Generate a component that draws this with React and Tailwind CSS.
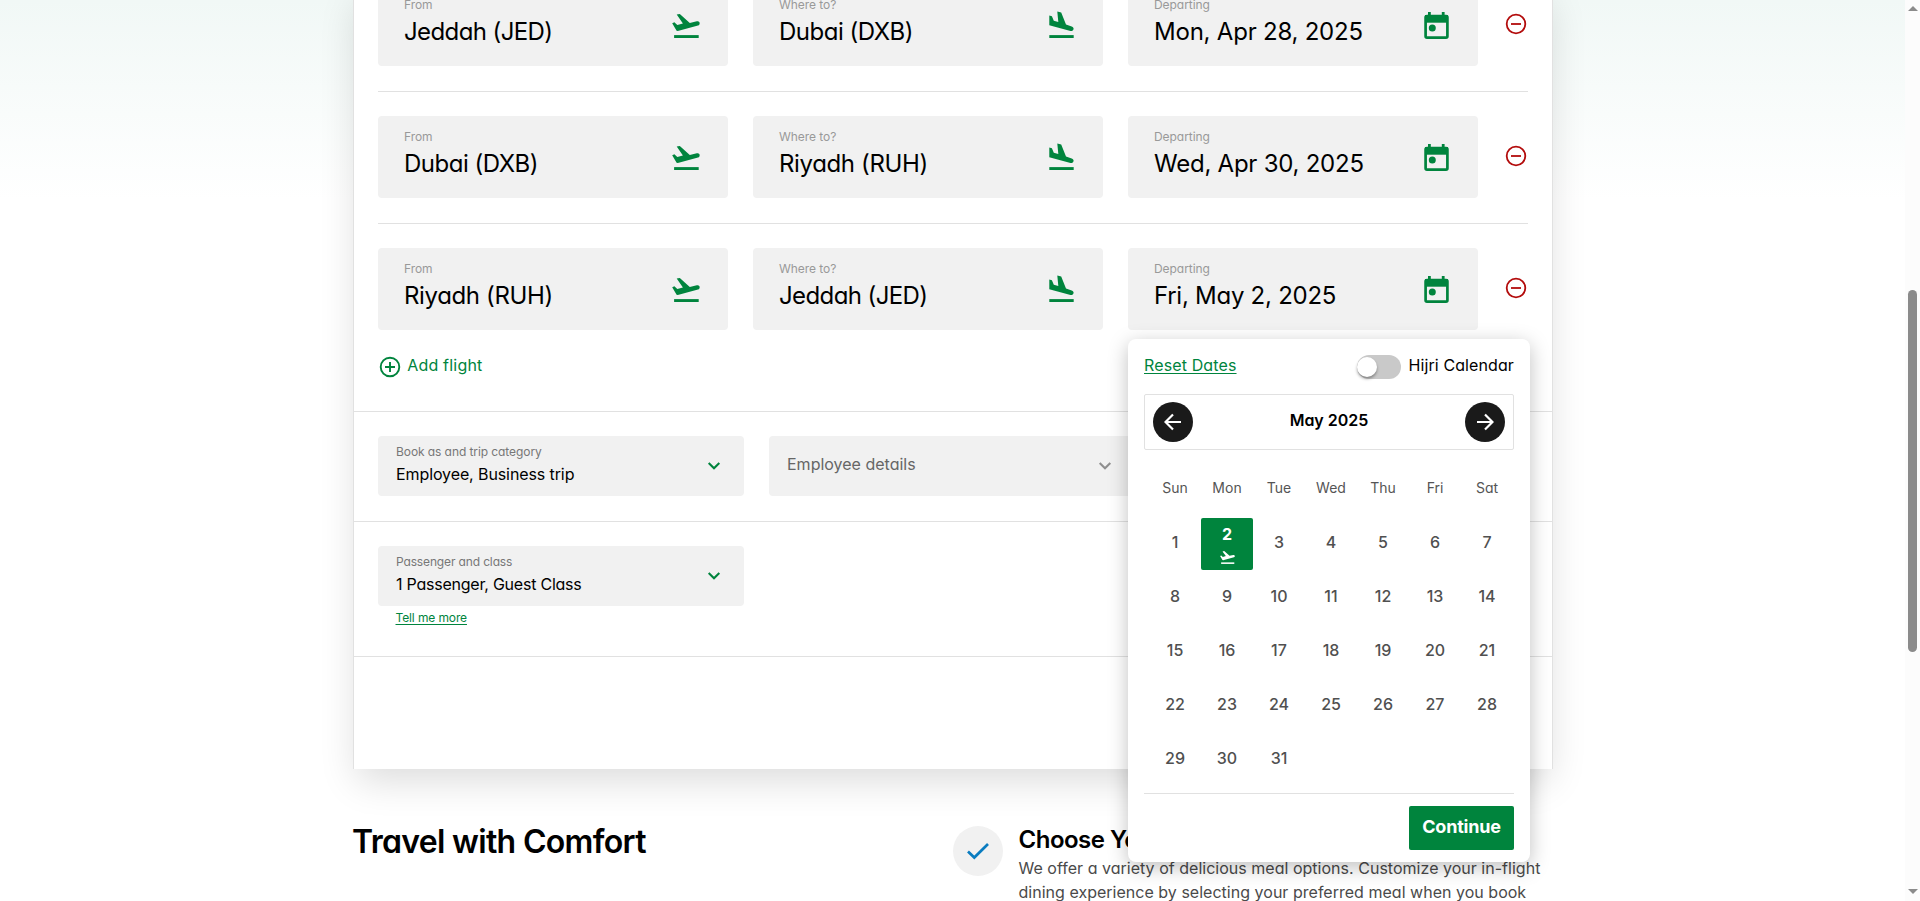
const jeddah = { text: "Jeddah (JED)", tracking: "tracking-[-0.6px]" };
const dubai = { text: "Dubai (DXB)", tracking: "tracking-[-0.5px]" };
const riyadh = { text: "Riyadh (RUH)", tracking: "tracking-[-0.36px]" };

const legs = [
  { from: jeddah, to: dubai, date: { text: "Mon, Apr 28, 2025", tracking: "tracking-[-0.22px]" } },
  { from: dubai, to: riyadh, date: { text: "Wed, Apr 30, 2025", tracking: "tracking-[-0.24px]" } },
  { from: riyadh, to: jeddah, date: { text: "Fri, May 2, 2025", tracking: "tracking-[-0.26px]" } },
];

const Takeoff = ({ className }) => (
  <svg viewBox="0 0 28 24" fill="currentColor" className={className}>
    <path d="M4.7.6 7.8 0l10 8.9 7-1.6c1.3-.3 2.4.3 2.8 1.4.3 1.3-.3 2.5-1.6 2.9L5.8 17l-1.2-.3L.2 9.3l2.2-1 2.9 2.6 5.6-1.5z" />
    <path d="M2.1 21.1h24.6V24H2.1z" />
  </svg>
);

const Land = ({ className }) => (
  <svg viewBox="0 0 25 27" fill="currentColor" className={className}>
    <path d="m8.3.4 3.9 1.2 4.8 12 5.7 1.8c1.5.5 2.2 1.6 1.8 2.9-.4 1.4-1.5 2.1-3 1.7L.3 14.2V4.4l2.6.9 1.9 4.5 4.5 1.2z" />
    <path d="M.3 24.1h24.4V27H.3z" />
  </svg>
);

const Today = ({ className }) => (
  <svg viewBox="0 0 25 27" className={className}>
    <rect x="4" y="0" width="2.8" height="5" fill="currentColor" />
    <rect x="17.8" y="0" width="2.8" height="5" fill="currentColor" />
    <rect x="1.6" y="4" width="21.8" height="21.6" rx="1.4" fill="none" stroke="currentColor" strokeWidth="2.7" />
    <rect x="1" y="3" width="23" height="7.7" fill="currentColor" />
    <circle cx="8.3" cy="16" r="3.5" fill="currentColor" />
  </svg>
);

const Remove = () => (
  <svg viewBox="0 0 22 22" className="size-[22px] text-[#b30c0c]" fill="none" stroke="currentColor" strokeWidth="1.8">
    <circle cx="11" cy="11" r="9.3" />
    <path d="M6 11h10" />
  </svg>
);

const Chevron = ({ className }) => (
  <svg viewBox="0 0 14 10" className={className} fill="none" stroke="currentColor" strokeWidth="2.1">
    <path d="M1.7 2 7 7.3 12.3 2" />
  </svg>
);

const Arrow = ({ className }) => (
  <span className="flex size-10 items-center justify-center rounded-full bg-[#1a1a1a] text-white">
    <svg viewBox="0 0 18 18" className={className} fill="none" stroke="currentColor" strokeWidth="2.2">
      <path d="M17 9H2M9 1.5 1.5 9 9 16.5" />
    </svg>
  </span>
);

const Field = ({ label, value, icon, iconClass, children }) => (
  <div className="relative flex h-[82px] w-[350px] justify-between rounded bg-[#f1f1f1] pl-[26px] pt-[13px]">
    <div className="whitespace-nowrap">
      <div className="text-[12px] leading-4 tracking-[-0.05px] text-[#999]">{label}</div>
      <div className={"mt-[3px] text-[24px] leading-8 text-black " + value.tracking}>{value.text}</div>
    </div>
    <div className={"text-[#00843d] " + iconClass}>{icon}</div>
    {children}
  </div>
);

const Select = ({ label, labelClass, value, valueClass, chevron = "text-[#00843d]", placeholder }) => (
  <div className="flex h-[60px] w-[366px] justify-between whitespace-nowrap rounded bg-[#f1f1f1] pl-[18px] pr-[23px]">
    {placeholder ? (
      <div className="pt-4 text-[16px] leading-6 text-[#666]">{placeholder}</div>
    ) : (
      <div className="pt-2">
        <div className={"text-[12px] leading-4 text-[#777] " + labelClass}>{label}</div>
        <div className={"mt-0.5 text-[16px] leading-6 text-black " + valueClass}>{value}</div>
      </div>
    )}
    <Chevron className={"mt-[25px] h-[10px] w-[14px] " + chevron} />
  </div>
);

const days = Array.from({ length: 31 }, (_, i) => i + 1);

const Calendar = () => (
  <div className="absolute left-0 top-[91px] z-20 flex h-[523px] w-[402px] flex-col rounded-lg bg-white px-4 text-black shadow-[0_5px_20px_rgba(0,0,0,0.25)]">
    <div className="mt-4 flex h-6 items-center justify-between text-[16px] leading-6">
      <a className="-mt-1 tracking-[0.13px] text-[#00843d] underline underline-offset-2">Reset Dates</a>
      <div className="flex items-center">
        <span className="mr-2 flex h-6 w-11 items-center rounded-full bg-[#c9c9c9]">
          <span className="size-5 rounded-full bg-white shadow-[0_2px_3px_rgba(0,0,0,0.35)]" />
        </span>
        <span className="-mt-1 tracking-[0.1px]">Hijri Calendar</span>
      </div>
    </div>
    <div className="mt-[15px] flex h-14 items-center justify-between rounded-xs border border-[#e1e1e1] px-2">
      <Arrow className="size-[18px]" />
      <span className="-mt-1 text-[16px] font-semibold leading-6">May 2025</span>
      <Arrow className="size-[18px] rotate-180" />
    </div>
    <div className="ml-[5px] mt-[26px] grid grid-cols-[repeat(7,52px)] text-center text-[14px] leading-6 text-[#555]">
      {["Sun", "Mon", "Tue", "Wed", "Thu", "Fri", "Sat"].map((d) => (
        <span key={d}>{d}</span>
      ))}
    </div>
    <div className="ml-[5px] mt-[18px] grid grid-cols-[repeat(7,52px)] gap-y-0.5 text-center text-[16px] font-medium leading-6 text-[#505050]">
      {days.map((d) =>
        d === 2 ? (
          <div key={d} className="flex h-[52px] flex-col items-center rounded-xs bg-[#00843d] pt-1 font-bold text-white">
            {d}
            <Takeoff className="mt-[5px] h-[13px] w-[15px]" />
          </div>
        ) : (
          <div key={d} className="h-[52px] pt-3">{d}</div>
        )
      )}
    </div>
    <div className="mt-[7px] flex justify-end border-t border-[#e1e1e1] pt-3">
      <button className="h-11 w-[105px] rounded-xs bg-[#00843d] pb-[3px] text-[18px] font-bold tracking-[-0.2px] text-white">Continue</button>
    </div>
  </div>
);

const Scrollbar = () => (
  <div className="flex h-full w-[15px] shrink-0 flex-col items-center bg-[#fcfcfc]">
    <svg viewBox="0 0 10 5" className="mt-1.5 h-[5px] w-[10px]"><path d="M0 5 5 0l5 5z" fill="#8b8b8b" /></svg>
    <div className="mt-[279px] h-[362px] w-[9px] rounded-full bg-[#8b8b8b]" />
    <svg viewBox="0 0 10 5" className="mt-auto mb-[7px] h-[5px] w-[10px]"><path d="M0 0 5 5l5-5z" fill="#8b8b8b" /></svg>
  </div>
);

export default function App() {
  return (
    <div className="flex h-[901px] w-full overflow-hidden bg-white font-['Inter',sans-serif] [font-feature-settings:'cv11']">
      <div className="flex min-w-0 flex-1 flex-col bg-gradient-to-b from-[#f1f8f6] to-white to-[200px] pl-[353px]">
        <main className="relative z-10 -mt-4 h-[785px] w-[1200px] shrink-0 border-x border-[#e1e1e1] bg-white shadow-[0_16px_36px_-4px_rgba(0,0,0,0.14)]">
          <div className="flex h-[427px] flex-col px-6">
            {legs.map((leg, i) => (
              <div key={i} className={i < 2 ? "mb-6 flex gap-[25px] border-b border-[#e1e1e1] pb-[25px]" : "flex gap-[25px]"}>
                <Field label="From" value={leg.from} iconClass="mr-7 mt-[17px]" icon={<Takeoff className="h-6 w-7" />} />
                <Field label="Where to?" value={leg.to} iconClass="mr-[29px] mt-3.5" icon={<Land className="h-[27px] w-[25px]" />} />
                <Field label="Departing" value={leg.date} iconClass="mr-[29px] mt-[15px]" icon={<Today className="h-[27px] w-[25px]" />}>
                  {i === 2 && <Calendar />}
                </Field>
                <div className="ml-[1.5px] mt-[29px]"><Remove /></div>
              </div>
            ))}
            <div className="mt-6 flex items-center text-[16px] leading-6 text-[#00843d]">
              <svg viewBox="0 0 22 22" className="ml-[0.7px] mt-0.5 size-[22px]" fill="none" stroke="currentColor" strokeWidth="1.9">
                <circle cx="11" cy="11" r="9.3" />
                <path d="M6 11h10M11 6v10" />
              </svg>
              <span className="-mt-0.5 ml-[6.5px] tracking-[0.2px]">Add flight</span>
            </div>
          </div>
          <div className="flex h-[110px] gap-[25px] border-t border-[#e1e1e1] px-6 pt-6">
            <Select label="Book as and trip category" labelClass="tracking-[-0.08px]" value="Employee, Business trip" valueClass="tracking-[-0.1px]" />
            <Select placeholder="Employee details" chevron="text-[#8f8f8f]" />
          </div>
          <div className="h-[136px] border-y border-[#e1e1e1] px-6 pt-6">
            <Select label="Passenger and class" labelClass="tracking-[-0.14px]" value="1 Passenger, Guest Class" valueClass="tracking-[-0.23px]" />
            <a className="ml-[17.5px] mt-1 block text-[12px] leading-4 tracking-[-0.12px] text-[#00843d] underline underline-offset-2">Tell me more</a>
          </div>
        </main>
        <section className="-ml-px flex w-[1200px] pt-[57px]">
          <h2 className="w-[601px] shrink-0 text-[32px] font-semibold leading-8 tracking-[-0.68px] text-black">Travel with Comfort</h2>
          <div className="flex">
            <span className="flex size-[50px] shrink-0 items-center justify-center rounded-full bg-[#f1f1f1]">
              <svg viewBox="0 0 24 18" className="h-[18px] w-6" fill="none" stroke="#0a7cc0" strokeWidth="2.7"><path d="m2 9.5 6.3 6L22 2" /></svg>
            </span>
            <div className="ml-[15.5px] w-[560px] whitespace-nowrap">
              <h3 className="text-[24px] font-semibold leading-7 tracking-[-0.5px] text-black">Choose Your Meal</h3>
              <p className="mt-0.5 text-[16px] leading-6 tracking-[0.02px] text-[#4a4a4a]">
                We offer a variety of delicious meal options. Customize your in-flight<br />
                dining experience by selecting your preferred meal when you book
              </p>
            </div>
          </div>
        </section>
      </div>
      <Scrollbar />
    </div>
  );
}
